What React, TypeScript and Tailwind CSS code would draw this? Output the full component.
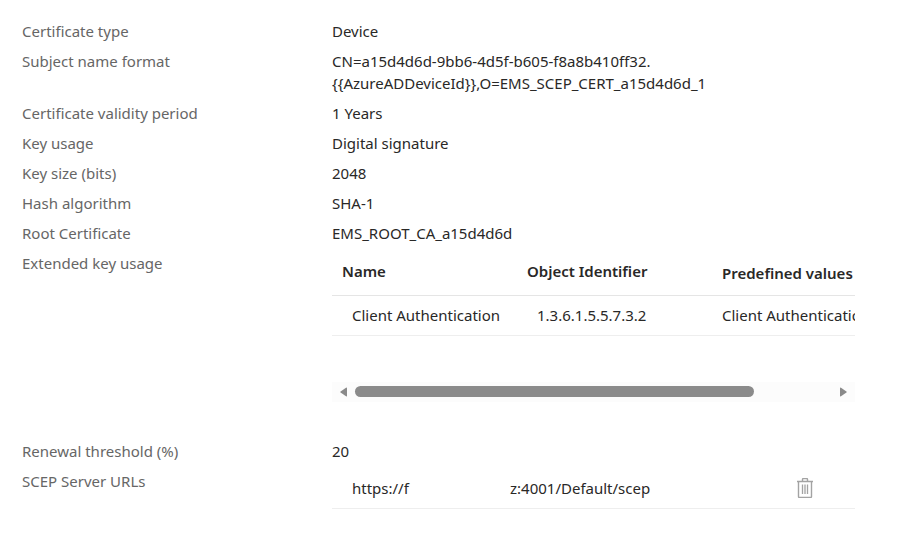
import React from 'react';

type Field = {
  label: string;
  value: React.ReactNode;
};

const fields: Field[] = [
  { label: 'Certificate type', value: 'Device' },
  {
    label: 'Subject name format',
    value: (
      <>
        CN=a15d4d6d-9bb6-4d5f-b605-f8a8b410ff32.
        <br />
        {'{{AzureADDeviceId}},O=EMS_SCEP_CERT_a15d4d6d_1'}
      </>
    ),
  },
  { label: 'Certificate validity period', value: '1 Years' },
  { label: 'Key usage', value: 'Digital signature' },
  { label: 'Key size (bits)', value: '2048' },
  { label: 'Hash algorithm', value: 'SHA-1' },
  { label: 'Root Certificate', value: 'EMS_ROOT_CA_a15d4d6d' },
];

const Row = ({ label, children }: { label: string; children: React.ReactNode }) => (
  <div className="flex">
    <dt className="w-[310px] shrink-0 py-1 text-[#666666]">{label}</dt>
    <dd className="min-w-0 flex-1">{children}</dd>
  </div>
);

const TrashIcon = () => (
  <svg width="16" height="20" viewBox="0 0 16 20" fill="none" stroke="#a3a3a3" aria-hidden="true">
    <path d="M0 3.5h16M5.5 3V1.5Q5.5.5 6.5.5h3q1 0 1 1V3M1.5 3.5v15q0 1 1 1h11q1 0 1-1v-15" strokeWidth="1.4" />
    <path d="M5.5 6.5v9.5M8 6.5v9.5M10.5 6.5v9.5" strokeWidth="1.3" />
  </svg>
);

const KeyUsageTable = () => (
  <div className="overflow-hidden">
    <table className="w-[680px] table-fixed text-left">
      <thead>
        <tr className="h-[47px] border-b border-[#e5e5e5]">
          <th className="w-[185px] pl-2.5 font-semibold">Name</th>
          <th className="w-[195px] pl-2.5 font-semibold">Object Identifier</th>
          <th className="pt-1 pl-2.5 font-semibold">Predefined values</th>
        </tr>
      </thead>
      <tbody>
        <tr className="h-10 border-b border-[#eeeeee]">
          <td className="pl-5">Client Authentication</td>
          <td className="pl-5">1.3.6.1.5.5.7.3.2</td>
          <td className="pl-2.5">Client Authentication</td>
        </tr>
      </tbody>
    </table>
  </div>
);

const ScrollBar = () => (
  <div className="mt-[46px] flex h-5 items-center bg-[#fcfcfc] px-2" aria-hidden="true">
    <svg width="7" height="10" viewBox="0 0 7 10" fill="#8a8a8a">
      <path d="M7 1.2v7.6q0 1-1 .5L.6 5.6q-.8-.6 0-1.2L6 .7q1-.5 1 .5z" />
    </svg>
    <div className="mx-2 flex-1">
      <div className="h-[11px] w-[399px] max-w-full rounded-full bg-[#8b8b8b]" />
    </div>
    <svg width="7" height="10" viewBox="0 0 7 10" fill="#8a8a8a">
      <path d="M0 1.2v7.6q0 1 1 .5l5.4-3.7q.8-.6 0-1.2L1 .7q-1-.5-1 .5z" />
    </svg>
  </div>
);

export default function App() {
  return (
    <main className="min-h-screen bg-white py-4 pr-[45px] pl-[22px] font-['Noto_Sans','Open_Sans',sans-serif] text-[15px] leading-[22px] text-[#292827]">
      <dl>
        {fields.map((field) => (
          <Row key={field.label} label={field.label}>
            <div className="py-1">{field.value}</div>
          </Row>
        ))}
        <Row label="Extended key usage">
          <KeyUsageTable />
          <ScrollBar />
        </Row>
        <div className="mt-[34px]">
          <Row label="Renewal threshold (%)">
            <div className="py-1">20</div>
          </Row>
        </div>
        <Row label="SCEP Server URLs">
          <div className="flex h-[43px] items-center border-b border-[#eeeeee] pt-0.5 pl-5">
            <span className="w-[158px]">https://f</span>
            <span className="flex-1">z:4001/Default/scep</span>
            <button type="button" aria-label="Delete URL" className="mr-[42px]">
              <TrashIcon />
            </button>
          </div>
        </Row>
      </dl>
    </main>
  );
}
